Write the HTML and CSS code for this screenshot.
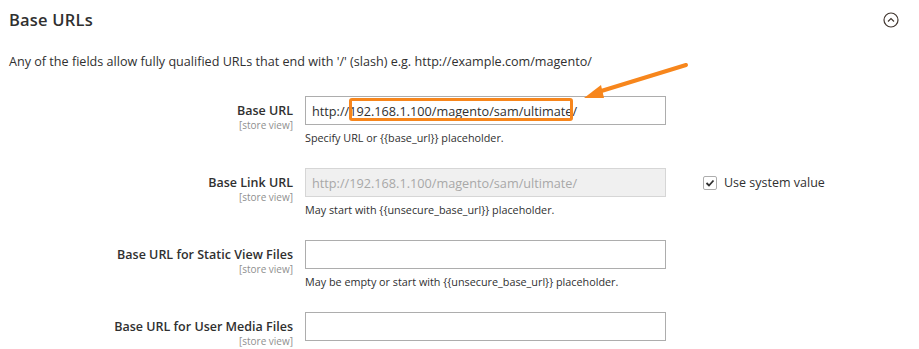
FILE: index.html
```html
<!DOCTYPE html>
<html>
	<head>
		<link rel="stylesheet" href="styles.css">
		<title>Base URLs</title>
	</head>
	<body>
		<div class="section">
			<div class="sectionHead">
				<strong class="sectionTitle">Base URLs</strong>
				<svg class="collapse" width="16" height="16" viewBox="0 0 16 16">
					<circle cx="8" cy="8" r="7" fill="none" stroke="#41362f" stroke-width="1.2"/>
					<path d="M5 9.5 L8 6.5 L11 9.5" fill="none" stroke="#41362f" stroke-width="1.2"/>
				</svg>
			</div>
			<p class="comment">Any of the fields allow fully qualified URLs that end with '/' (slash) e.g. http://example.com/magento/</p>

			<div class="row">
				<div class="label">Base URL<span class="scope">[store view]</span></div>
				<div class="value">
					<div class="field">
						<input class="text" type="text" value="http://192.168.1.100/magento/sam/ultimate/">
						<span class="mark"></span>
					</div>
					<div class="note">Specify URL or {{base_url}} placeholder.</div>
				</div>
				<div class="system"></div>
			</div>

			<div class="row">
				<div class="label">Base Link URL<span class="scope">[store view]</span></div>
				<div class="value">
					<input class="text" type="text" value="http://192.168.1.100/magento/sam/ultimate/" disabled>
					<div class="note">May start with {{unsecure_base_url}} placeholder.</div>
				</div>
				<div class="system">
					<span class="check">
						<svg width="10" height="10" viewBox="0 0 10 10"><path d="M1.5 5 L4 7.5 L8.5 2.5" fill="none" stroke="#303030" stroke-width="1.8"/></svg>
					</span>
					Use system value
				</div>
			</div>

			<div class="row">
				<div class="label">Base URL for Static View Files<span class="scope">[store view]</span></div>
				<div class="value">
					<input class="text" type="text" value="">
					<div class="note">May be empty or start with {{unsecure_base_url}} placeholder.</div>
				</div>
				<div class="system"></div>
			</div>

			<div class="row">
				<div class="label">Base URL for User Media Files<span class="scope">[store view]</span></div>
				<div class="value">
					<input class="text" type="text" value="">
				</div>
				<div class="system"></div>
			</div>
		</div>

		<!-- annotation arrow -->
		<svg class="arrow" width="919" height="349" viewBox="0 0 919 349">
			<path d="M686 65 L598 92" fill="none" stroke="#f7861c" stroke-width="4" stroke-linecap="round"/>
			<path d="M584 98 L601 85 L604 98 Z" fill="#f7861c"/>
		</svg>
	</body>
</html>
```

FILE: styles.css
```css
body {
	margin: 0;
	font-family: "Open Sans", "Liberation Sans", sans-serif;
	color: #303030;
	background: #ffffff;
	overflow: hidden;
}
.section {
	padding: 0 20px 0 9px;
}
.sectionHead {
	display: flex;
	justify-content: space-between;
	align-items: center;
	height: 36px;
	padding-top: 1px;
}
.sectionTitle {
	font-size: 16.5px;
	font-weight: 600;
	color: #303030;
	letter-spacing: 0.2px;
}
.collapse {
	margin-top: 2px;
}
.comment {
	margin: 16px 0 26px 0;
	font-size: 12.6px;
	color: #303030;
}
.row {
	display: grid;
	grid-template-columns: 284px 361px auto;
	column-gap: 12px;
	margin-bottom: 16px;
	min-height: 56px;
}
.label {
	text-align: right;
	font-size: 12.5px;
	font-weight: 600;
	color: #303030;
	padding-top: 6px;
	line-height: 17px;
}
.scope {
	display: block;
	font-size: 10px;
	font-weight: 400;
	color: #8f8f8f;
	line-height: 12px;
}
.field {
	position: relative;
}
.text {
	box-sizing: border-box;
	width: 361px;
	height: 29px;
	margin: 0;
	padding: 0 6px;
	border: 1px solid #adadad;
	font-family: "Open Sans", "Liberation Sans", sans-serif;
	font-size: 12.7px;
	color: #303030;
	background: #ffffff;
	display: block;
}
.text:disabled {
	background: #f0f0f0;
	border-color: #d6d6d6;
	color: #a8a8a8;
}
.mark {
	position: absolute;
	left: 44px;
	top: 2px;
	width: 218px;
	height: 17px;
	border: 3px solid #f7861c;
	border-radius: 3px;
}
.note {
	font-size: 10.8px;
	color: #303030;
	margin-top: 5px;
}
.system {
	padding-left: 25px;
	padding-top: 6px;
	font-size: 12.5px;
	color: #303030;
	display: flex;
	align-items: flex-start;
	gap: 7px;
}
.check {
	box-sizing: border-box;
	width: 14px;
	height: 14px;
	border: 1px solid #adadad;
	border-radius: 2px;
	display: flex;
	align-items: center;
	justify-content: center;
	margin-top: 2px;
}
.arrow {
	position: absolute;
	left: 0;
	top: 0;
	pointer-events: none;
}
```
